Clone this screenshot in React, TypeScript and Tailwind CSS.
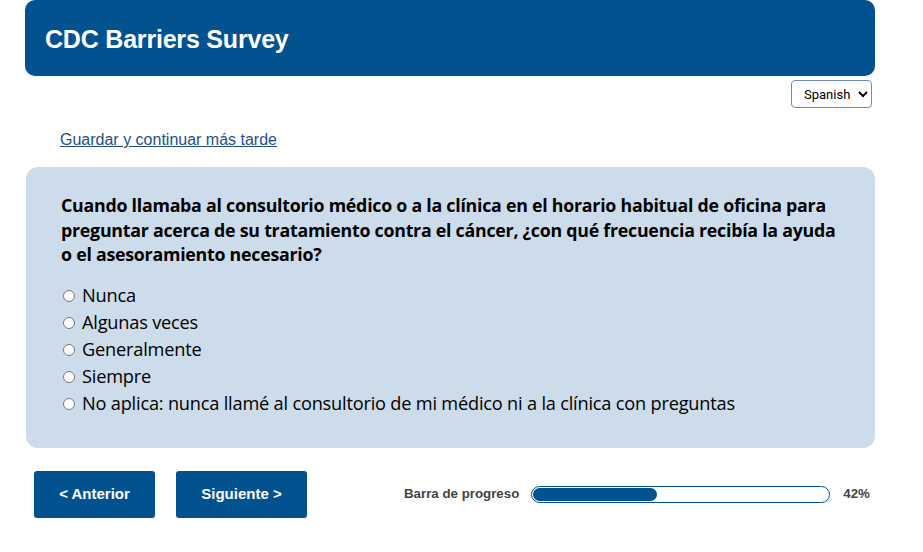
import React from "react";

const options = [
  "Nunca",
  "Algunas veces",
  "Generalmente",
  "Siempre",
  "No aplica: nunca llamé al consultorio de mi médico ni a la clínica con preguntas",
];

export default function App() {
  const progress = 42;
  return (
    <div className="min-h-[552px] w-[923px] bg-white font-['Liberation_Sans',Arial,sans-serif]">
      <div className="pl-[25px] pr-[48px]">
        <header className="flex h-[76px] items-center rounded-[10px] bg-[#02528f] pl-[20px] pt-[3px]">
          <h1 className="text-[25px] font-bold tracking-[-0.2px] text-white">CDC Barriers Survey</h1>
        </header>

        <div className="mt-[4px] flex justify-end pr-[3px]">
          <select className="h-[28px] w-[81px] rounded-[4px] border border-[#6b8cc0] bg-white pl-[8px] pr-[2px] font-['Roboto',sans-serif] text-[13px] text-black">
            <option>Spanish</option>
          </select>
        </div>

        <div className="mt-[20px] pl-[35px]">
          <a href="#" className="text-[16px] text-[#1f4e8c] underline">
            Guardar y continuar más tarde
          </a>
        </div>

        <section className="mt-[15px] ml-[1px] rounded-[12px] bg-[#cddcea] pl-[35px] pr-[35px] pt-[26px] pb-[30px] font-['Open_Sans','Noto_Sans',sans-serif] text-black">
          <h2 className="text-[17.8px] font-bold leading-[24.5px] tracking-[-0.25px]">
            Cuando llamaba al consultorio médico o a la clínica en el horario habitual de oficina para preguntar acerca de su tratamiento contra el cáncer, ¿con qué frecuencia recibía la ayuda o el asesoramiento necesario?
          </h2>
          <ul className="mt-[16px] flex flex-col">
            {options.map((o) => (
              <li key={o} className="flex h-[27px] items-center">
                <span className="ml-[2px] mr-[7px] h-[12px] w-[12px] rounded-full border border-[#767676] bg-white" />
                <span className="text-[18.2px] tracking-[-0.2px]">{o}</span>
              </li>
            ))}
          </ul>
        </section>

        <div className="mt-[23px] flex items-center pl-[9px]">
          <button className="h-[47px] w-[121px] rounded-[3px] bg-[#02528f] text-[15px] font-bold text-white">
            &lt; Anterior
          </button>
          <button className="ml-[21px] h-[47px] w-[131px] rounded-[3px] bg-[#02528f] text-[15px] font-bold text-white">
            Siguiente &gt;
          </button>
          <span className="ml-[97px] text-[13.3px] font-bold text-[#444]">Barra de progreso</span>
          <div className="ml-[12px] h-[17px] w-[299px] rounded-full border-[1.5px] border-[#02528f] bg-white p-[1px]">
            <div className="h-full rounded-full bg-[#02528f]" style={{ width: `${progress}%` }} />
          </div>
          <span className="ml-[13px] text-[13.3px] font-bold text-[#444]">{progress}%</span>
        </div>
      </div>
    </div>
  );
}
